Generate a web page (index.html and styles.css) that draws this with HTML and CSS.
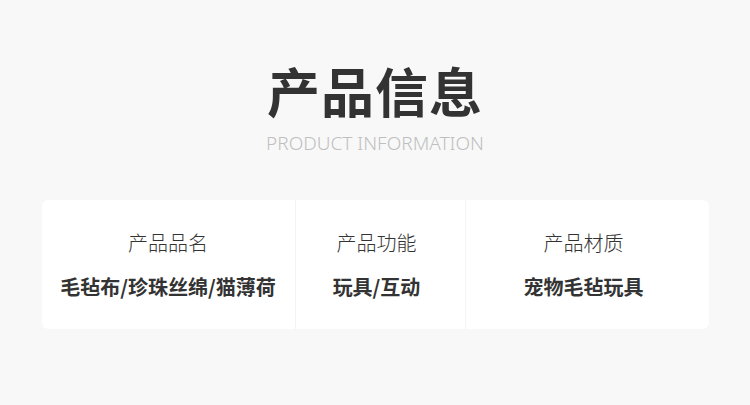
FILE: index.html
```html
<!DOCTYPE html>
<html lang="zh-CN">
<head>
  <meta charset="UTF-8">
  <title>产品信息</title>
  <meta name="viewport" content="width=device-width, initial-scale=1.0">
  <link rel="stylesheet" href="styles.css">
</head>
<body>

  <div class="heading">
    <h1>产品信息</h1>
    <p class="sub">PRODUCT INFORMATION</p>
  </div>

  <div class="info-table">
    <div class="cell">
      <div class="label">产品品名</div>
      <div class="value">毛毡布/珍珠丝绵/猫薄荷</div>
    </div>
    <div class="cell cell-narrow">
      <div class="label">产品功能</div>
      <div class="value">玩具/互动</div>
    </div>
    <div class="cell cell-narrow">
      <div class="label">产品材质</div>
      <div class="value">宠物毛毡玩具</div>
    </div>
  </div>

</body>
</html>
```

FILE: styles.css
```css
* {
  margin: 0;
  padding: 0;
  box-sizing: border-box;
}

body, html {
  height: 100%;
  overflow: hidden;
}

body {
  background: #f8f8f8;
  font-family: "Noto Sans CJK SC", "Noto Sans", sans-serif;
  color: #333;
}

.heading {
  padding-top: 63px;
  text-align: center;
}

h1 {
  font-size: 53px;
  line-height: 54px;
  font-weight: 700;
  color: #333;
  letter-spacing: 1px;
}

.sub {
  margin-top: 17px;
  font-family: "Noto Sans", "Open Sans", sans-serif;
  font-size: 19px;
  line-height: 19px;
  font-weight: 300;
  color: #bfbfbf;
}

.info-table {
  width: 667px;
  margin: 47px auto 0;
  display: grid;
  grid-template-columns: 253px 169px 1fr;
  gap: 1px;
  background: #f4f4f4;
  border-radius: 6px;
  overflow: hidden;
}

.cell {
  background: #fff;
  height: 129px;
  padding-top: 33px;
  text-align: center;
}

.cell-narrow {
  padding-right: 7px;
}

.label {
  font-size: 20px;
  line-height: 20px;
  font-weight: 300;
  color: #333;
}

.value {
  margin-top: 24px;
  font-size: 20px;
  line-height: 20px;
  font-weight: 700;
  color: #333;
}
```
